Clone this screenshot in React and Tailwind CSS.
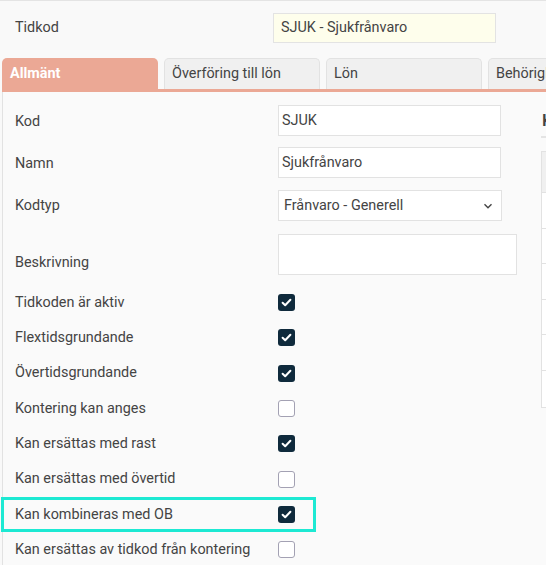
import React from "react";

function Check({ checked }) {
  if (checked) {
    return (
      <div className="w-[17px] h-[17px] rounded-[3px] bg-[#0f2a3c] flex items-center justify-center">
        <svg width="13" height="13" viewBox="0 0 13 13">
          <path d="M2.6 6.8 L5.2 9.3 L10.4 3.8" fill="none" stroke="white" strokeWidth="2" strokeLinecap="round" strokeLinejoin="round" />
        </svg>
      </div>
    );
  }
  return <div className="w-[17px] h-[17px] rounded-[3px] bg-white border border-[#a3a1b3]" />;
}

const checks = [
  ["Tidkoden är aktiv", true],
  ["Flextidsgrundande", true],
  ["Övertidsgrundande", true],
  ["Kontering kan anges", false],
  ["Kan ersättas med rast", true],
  ["Kan ersättas med övertid", false],
  ["Kan kombineras med OB", true, true],
  ["Kan ersättas av tidkod från kontering", false],
];

export default function App() {
  return (
    <div
      className="w-[546px] h-[565px] overflow-hidden bg-[#f9f9f9] border-t border-[#e4e4e4] text-[14.4px] text-[#444]"
      style={{ fontFamily: "Roboto, 'Liberation Sans', sans-serif" }}
    >
      {/* Tidkod row */}
      <div className="flex items-center pt-[12px]">
        <div className="w-[273px] pl-[15px]">Tidkod</div>
        <div className="w-[223px] h-[30px] bg-[#fefeec] border border-[#e3e3e3] flex items-center pl-[7px] shrink-0">
          SJUK - Sjukfrånvaro
        </div>
      </div>

      {/* Tabs */}
      <div className="flex gap-[6px] pl-[2px] mt-[15px] overflow-hidden">
        <div className="w-[156px] h-[31px] shrink-0 rounded-t-[5px] bg-[#eba895] text-white font-bold flex items-center pl-[8px]">
          Allmänt
        </div>
        {["Överföring till lön", "Lön", "Behörighet"].map((t) => (
          <div
            key={t}
            className="w-[156px] h-[31px] shrink-0 rounded-t-[5px] bg-[#f0f0f0] border border-b-0 border-[#e2e2e2] flex items-center pl-[7px] whitespace-nowrap overflow-hidden"
          >
            {t}
          </div>
        ))}
      </div>
      <div className="ml-[2px] h-[3px] bg-[#eba895]" />

      {/* Panel */}
      <div className="ml-[2px] border-l border-[#e2e2e2] bg-[#fafafa] flex h-[480px]">
        <div className="w-[538px] shrink-0 pl-[12px] pt-[13px]">
          <div className="flex items-center">
            <div className="w-[263px] pt-[2px]">Kod</div>
            <div className="w-[223px] h-[31px] bg-white border border-[#e2e2e2] flex items-center pl-[3px]">SJUK</div>
          </div>
          <div className="flex items-center mt-[11px]">
            <div className="w-[263px] pt-[2px]">Namn</div>
            <div className="w-[223px] h-[31px] bg-white border border-[#e2e2e2] flex items-center pl-[3px]">Sjukfrånvaro</div>
          </div>
          <div className="flex items-center mt-[12px]">
            <div className="w-[263px]">Kodtyp</div>
            <div className="w-[224px] h-[31px] bg-white border border-[#e2e2e2] flex items-center justify-between pl-[5px] pr-[8px]">
              <span>Frånvaro - Generell</span>
              <svg width="10" height="10" viewBox="0 0 10 10">
                <path d="M1.5 3.3 L5 6.8 L8.5 3.3" fill="none" stroke="#444" strokeWidth="1.4" />
              </svg>
            </div>
          </div>
          <div className="flex items-center mt-[13px]">
            <div className="w-[263px] pt-[17px]">Beskrivning</div>
            <div className="w-[239px] h-[41px] bg-white border border-[#e2e2e2]" />
          </div>
          <div className="mt-[10px]">
            {checks.map(([label, checked, hl]) => (
              <div key={label} className="relative flex items-center h-[35.3px]">
                <div className="w-[263px] whitespace-nowrap">{label}</div>
                <Check checked={checked} />
                {hl && (
                  <div className="absolute left-[-14px] top-[0px] w-[315px] h-[35px] border-[3px] border-[#1de9d3]" />
                )}
              </div>
            ))}
          </div>
        </div>
        <div className="flex-1 overflow-hidden">
          <div className="h-[46px] border-b-2 border-[#e4e4e4] flex items-end pb-[3px] pl-[1px] text-[17px] font-semibold whitespace-nowrap overflow-hidden">
            K
          </div>
          <div className="mt-[13px] border border-[#e2e2e2] w-[200px]">
            <div className="h-[41px] bg-[#f0f0f0] border-b border-[#e2e2e2]" />
            <div className="h-[36px] border-b border-[#e2e2e2] bg-white" />
            <div className="h-[35px] border-b border-[#e2e2e2] bg-white" />
            <div className="h-[36px] border-b border-[#e2e2e2] bg-white" />
            <div className="h-[35px] border-b border-[#e2e2e2] bg-white" />
            <div className="h-[36px] border-b border-[#e2e2e2] bg-white" />
            <div className="h-[36px] bg-white" />
          </div>
        </div>
      </div>
    </div>
  );
}
